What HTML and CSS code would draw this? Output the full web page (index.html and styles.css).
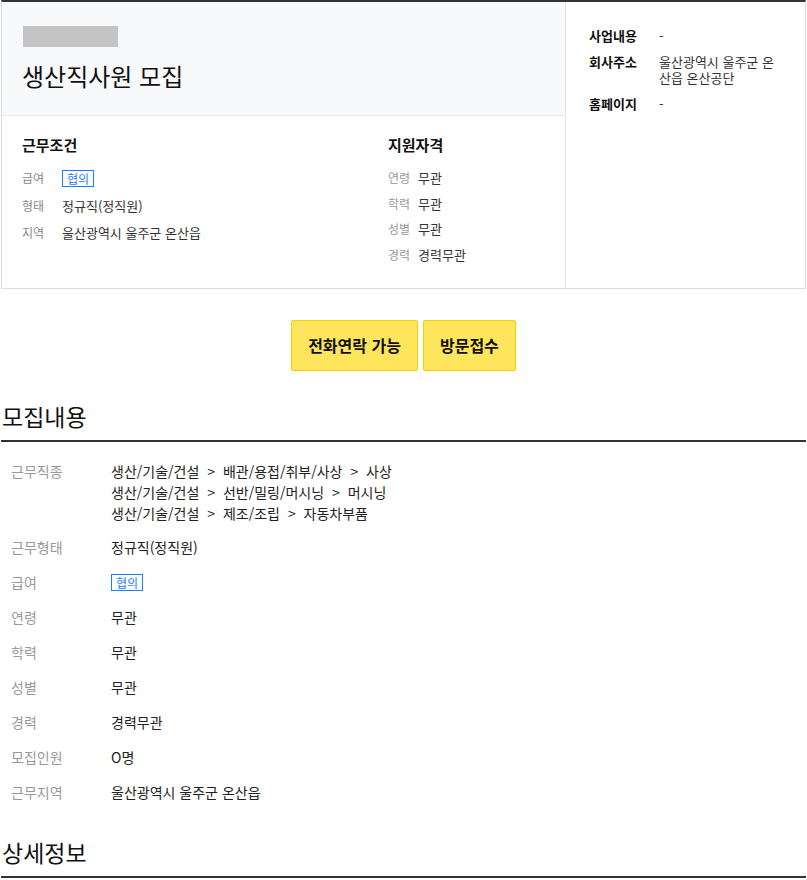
FILE: index.html
```html
<!DOCTYPE html>
<html lang="ko">
<head>
    <meta charset="UTF-8">
    <meta name="viewport" content="width=device-width, initial-scale=1.0">
    <title>생산직사원 모집</title>
    <link rel="stylesheet" href="styles.css">
</head>
<body>
<div class="page">

    <div class="summary">
        <div class="summary-main">
            <div class="summary-head">
                <div class="company-blank"></div>
                <h1 class="title">생산직사원 모집</h1>
            </div>
            <div class="summary-body">
                <div class="cond">
                    <h3>근무조건</h3>
                    <div class="cond-row"><span class="cond-label">급여</span><span class="badge">협의</span></div>
                    <div class="cond-row"><span class="cond-label">형태</span><span>정규직(정직원)</span></div>
                    <div class="cond-row"><span class="cond-label">지역</span><span>울산광역시 울주군 온산읍</span></div>
                </div>
                <div class="qual">
                    <h3>지원자격</h3>
                    <div class="qual-row"><span class="qual-label">연령</span><span>무관</span></div>
                    <div class="qual-row"><span class="qual-label">학력</span><span>무관</span></div>
                    <div class="qual-row"><span class="qual-label">성별</span><span>무관</span></div>
                    <div class="qual-row"><span class="qual-label">경력</span><span>경력무관</span></div>
                </div>
            </div>
        </div>
        <div class="company">
            <div class="company-row"><span class="company-label">사업내용</span><span class="company-value">-</span></div>
            <div class="company-row"><span class="company-label">회사주소</span><span class="company-value">울산광역시 울주군 온산읍 온산공단</span></div>
            <div class="company-row"><span class="company-label">홈페이지</span><span class="company-value">-</span></div>
        </div>
    </div>

    <div class="apply-buttons">
        <button type="button" class="apply-btn">전화연락 가능</button>
        <button type="button" class="apply-btn">방문접수</button>
    </div>

    <h2 class="section-title">모집내용</h2>
    <div class="detail-list">
        <div class="detail-row detail-row-multi">
            <div class="detail-label">근무직종</div>
            <div class="detail-value">
                <div>생산/기술/건설 <span class="sep">&gt;</span> 배관/용접/취부/사상 <span class="sep">&gt;</span> 사상</div>
                <div>생산/기술/건설 <span class="sep">&gt;</span> 선반/밀링/머시닝 <span class="sep">&gt;</span> 머시닝</div>
                <div>생산/기술/건설 <span class="sep">&gt;</span> 제조/조립 <span class="sep">&gt;</span> 자동차부품</div>
            </div>
        </div>
        <div class="detail-row"><div class="detail-label">근무형태</div><div class="detail-value">정규직(정직원)</div></div>
        <div class="detail-row"><div class="detail-label">급여</div><div class="detail-value"><span class="badge">협의</span></div></div>
        <div class="detail-row"><div class="detail-label">연령</div><div class="detail-value">무관</div></div>
        <div class="detail-row"><div class="detail-label">학력</div><div class="detail-value">무관</div></div>
        <div class="detail-row"><div class="detail-label">성별</div><div class="detail-value">무관</div></div>
        <div class="detail-row"><div class="detail-label">경력</div><div class="detail-value">경력무관</div></div>
        <div class="detail-row"><div class="detail-label">모집인원</div><div class="detail-value">O명</div></div>
        <div class="detail-row"><div class="detail-label">근무지역</div><div class="detail-value">울산광역시 울주군 온산읍</div></div>
    </div>

    <h2 class="section-title section-title-next">상세정보</h2>
</div>
</body>
</html>
```

FILE: styles.css
```css
body {
    margin: 0;
    padding: 0;
    background: #fff;
    color: #222;
    font-family: "Noto Sans CJK KR", "Noto Sans", sans-serif;
}
.page {
    padding: 0 1px;
}

/* top summary box */
.summary {
    display: flex;
    border: 1px solid #ddd;
    border-top: 2px solid #333;
}
.summary-main {
    width: 563px;
    border-right: 1px solid #e6e6e6;
}
.summary-head {
    background: #f8f9fb;
    padding: 24px 20px 24px;
    border-bottom: 1px solid #eaeaea;
}
.company-blank {
    width: 95px;
    height: 21px;
    margin-left: 1px;
    background: #c4c4c4;
}
.title {
    margin: 14px 0 0;
    font-size: 24px;
    line-height: 30px;
    font-weight: normal;
    color: #111;
}
.summary-body {
    display: flex;
    padding: 19px 20px 24px;
}
.summary-body h3 {
    margin: 0 0 14px;
    font-size: 15px;
    line-height: 20px;
    font-weight: bold;
    color: #111;
}
.cond {
    width: 366px;
}
.cond, .qual {
    display: flex;
    flex-direction: column;
}
.cond-row, .qual-row {
    display: flex;
    align-items: center;
    font-size: 13px;
    line-height: 18px;
    color: #333;
}
.cond-row + .cond-row {
    margin-top: 9.5px;
}
.qual-row + .qual-row {
    margin-top: 7.5px;
}
.cond-label {
    width: 40px;
    font-size: 12px;
    color: #888;
}
.qual-label {
    width: 30px;
    font-size: 12px;
    color: #999;
}
.badge {
    display: inline-block;
    padding: 0 4px;
    border: 1px solid #1a7cff;
    color: #1a7cff;
    font-size: 12px;
    line-height: 15px;
}

/* company info on the right */
.company {
    flex: 1;
    padding: 26px 26px 0 23px;
}
.company-row {
    display: flex;
    font-size: 13px;
    line-height: 16px;
    margin-bottom: 10px;
}
.company-label {
    width: 70px;
    flex-shrink: 0;
    font-weight: bold;
    color: #111;
}
.company-value {
    flex: 1;
    color: #333;
}

/* buttons */
.apply-buttons {
    display: flex;
    justify-content: center;
    gap: 5px;
    margin-top: 31px;
}
.apply-btn {
    font-family: inherit;
    font-size: 16px;
    font-weight: bold;
    line-height: 19px;
    padding: 15px 16px;
    background: #ffe55c;
    border: 1px solid #f5d000;
    border-radius: 2px;
    color: #111;
    cursor: pointer;
}

/* sections */
.section-title {
    margin: 30px 0 0;
    padding: 0 0 9px 1px;
    font-size: 23px;
    line-height: 30px;
    font-weight: normal;
    color: #111;
    border-bottom: 2px solid #333;
}
.section-title-next {
    margin-top: 27px;
}
.detail-list {
    padding-top: 12px;
}
.detail-row {
    display: flex;
    padding: 7px 0;
    font-size: 14px;
    line-height: 21px;
}
.detail-row-multi {
    padding-bottom: 6px;
}
.detail-label {
    width: 100px;
    padding-left: 10px;
    color: #999;
}
.detail-value {
    color: #222;
}
.sep {
    margin: 0 4px;
}
```
